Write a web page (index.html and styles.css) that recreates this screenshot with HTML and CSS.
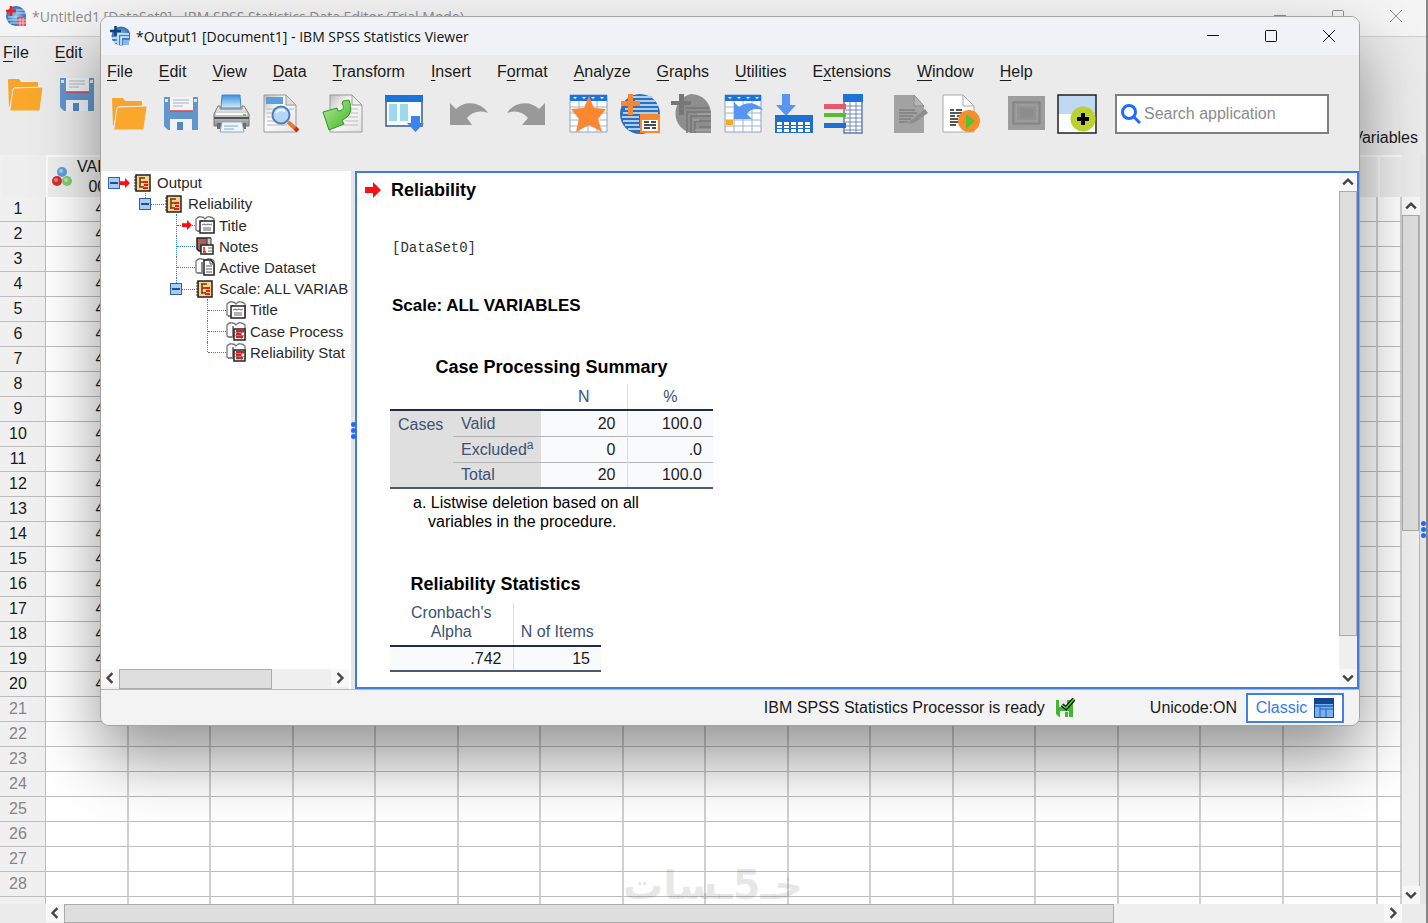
FILE: index.html
```
<!DOCTYPE html>
<html lang="en">
<head>
    <meta charset="UTF-8">
    <meta name="viewport" content="width=device-width, initial-scale=1.0">
    <title>IBM SPSS Statistics Viewer</title>
    <link rel="stylesheet" href="styles.css">
</head>
<body>

    <!-- Shared icons -->
    <svg class="sprite" aria-hidden="true">
        <defs>
            <linearGradient id="steel" x1="0" y1="0" x2="0" y2="1">
                <stop offset="0" stop-color="#f4f4f4"/><stop offset="1" stop-color="#8d8d8d"/>
            </linearGradient>
            <linearGradient id="paper" x1="0" y1="0" x2="1" y2="1">
                <stop offset="0" stop-color="#bdbdbd"/><stop offset="0.4" stop-color="#fdfdfd"/><stop offset="1" stop-color="#e4e4e4"/>
            </linearGradient>
            <linearGradient id="sky" x1="0" y1="0" x2="0" y2="1">
                <stop offset="0" stop-color="#3d8fe0"/><stop offset="1" stop-color="#d5ecfb"/>
            </linearGradient>
            <linearGradient id="leaf" x1="0" y1="0" x2="1" y2="1">
                <stop offset="0" stop-color="#b5eaa0"/><stop offset="1" stop-color="#3fb51f"/>
            </linearGradient>
            <radialGradient id="globe">
                <stop offset="0" stop-color="#9cc8ee"/><stop offset="1" stop-color="#2c6cb4"/>
            </radialGradient>
        </defs>
        <symbol id="folder" viewBox="0 0 40 40">
            <path d="M2 5q0-1 1-1h10l2 3h16q1 0 1 1v4H9L3 33z" fill="#f5a52d"/>
            <path d="M8 13L36 12q1 0 1 1l-3 22q0 1-1 1H5q-2 0-1-2L7 14z" fill="#f9a82c" stroke="#ececec" stroke-width="1"/>
        </symbol>
        <symbol id="floppy" viewBox="0 0 40 40">
            <path d="M3 3h34v33H7l-4-4z" fill="#6196cd"/>
            <path d="M9 3h23v14H9z" fill="#f2f4f6"/>
            <path d="M12 6h16M12 9h16M12 12h10" stroke="#aab4bf"/>
            <path d="M9 17h23" stroke="#d8414d" stroke-width="1.5"/>
            <path d="M9 25h22v11H9z" fill="#eef3f8"/>
            <path d="M16 28h6v8h-6z" fill="#5088c4"/>
            <path d="M4 5h3v3H4zM33 5h3v3h-3z" fill="#dfe9f3"/>
        </symbol>
        <symbol id="book" viewBox="0 0 20 20">
            <path d="M3 2h14v16H3z" fill="#fbd28b" stroke="#222" stroke-width="1.500"/>
            <path d="M1 4h3M1 7h3M1 10h3M1 13h3M1 16h3" stroke="#333"/>
            <path d="M7 5v9M6 5h6M7 9h4M6 14h5" stroke="#6b3a18" stroke-width="1.5" fill="none"/>
            <path d="M10 9h5M11 12h4M10 15h5" stroke="#f01818" stroke-width="2"/>
        </symbol>
        <symbol id="pages" viewBox="0 0 20 20">
            <path d="M1 15V4q3-3 5-2 3 0 4 2 2-3 5-2 2 0 4 2v12H3z" fill="#fff" stroke="#777" stroke-width="1.3"/>
            <path d="M2 16h5V5" fill="none" stroke="#888" stroke-width="2"/>
        </symbol>
        <symbol id="title" viewBox="0 0 20 20">
            <use href="#pages"/>
            <path d="M5 6h14v12H5z" fill="#fff" stroke="#222" stroke-width="1.5"/>
            <path d="M7 10l2-1 2 1 2-1 2 1 2-1M8 13h8M8 15h8" stroke="#666" fill="none"/>
        </symbol>
        <symbol id="notes" viewBox="0 0 20 20">
            <path d="M2 2h13v13H4l-2-2z" fill="#a9625c" stroke="#222" stroke-width="1.5"/>
            <path d="M12 2h4v10h-4z" fill="#ccc" stroke="#333"/>
            <path d="M6 9h12v9H6z" fill="#fff" stroke="#222" stroke-width="1.5"/>
            <path d="M9 11v5M8 16h3" stroke="#f01818" stroke-width="1.5"/>
            <path d="M13 12h4M13 15h4" stroke="#666"/>
        </symbol>
        <symbol id="dataset" viewBox="0 0 20 20">
            <use href="#pages"/>
            <path d="M9 3h7l3 4v11H9z" fill="#fff" stroke="#222" stroke-width="1.5"/>
            <path d="M15 3v4h4M11 9h6M11 12h6M11 15h6" stroke="#555" fill="none"/>
        </symbol>
        <symbol id="pivot" viewBox="0 0 20 20">
            <use href="#pages"/>
            <path d="M8 8h11v11H8z" fill="#fff" stroke="#222" stroke-width="1.5"/>
            <path d="M10 10h8M10 13h5M10 16h7" stroke="#f01818" stroke-width="2"/>
            <path d="M12 8v11M15.500 8v11M8 11.500h11M8 14.500h11" stroke="#555" stroke-width="0.600"/>
        </symbol>
        <symbol id="arrow" viewBox="0 0 16 16">
            <path d="M0 5h8V0l8 8-8 8v-5H0z" fill="#fa0f14"/>
        </symbol>
        <symbol id="chevron" viewBox="0 0 10 10">
            <path d="M1 7l4-4 4 4" fill="none" stroke="#444" stroke-width="2"/>
        </symbol>
    </svg>

    <!-- Data Editor -->
    <div class="editor">
        <header class="titlebar">
            <svg class="app-icon" viewBox="0 0 20 20">
                <circle cx="10" cy="10" r="10" fill="url(#globe)"/>
                <path d="M2 11h10M1 14h10M4 17h8M10 4h8M10 7h9" stroke="#b8d8f4"/>
                <path d="M11 11h9v9h-9z" fill="#d8536a"/>
                <path d="M11 14h9M11 17h9M14 12v8M17 12v8" stroke="#f4c3cc"/>
                <path d="M0 5h10M5 0v10" stroke="#f01e1e" stroke-width="2.500"/>
            </svg>
            <span class="title">*Untitled1 [DataSet0] - IBM SPSS Statistics Data Editor (Trial Mode)</span>
            <div class="controls">
                <button aria-label="Minimize"><svg viewBox="0 0 12 12"><path d="M0 5.500h12"/></svg></button>
                <button aria-label="Maximize"><svg viewBox="0 0 12 12"><rect x="0.500" y="0.500" width="11" height="11" rx="1"/></svg></button>
                <button aria-label="Close"><svg viewBox="0 0 12 12"><path d="M0 0l12 12M12 0L0 12"/></svg></button>
            </div>
        </header>
        <nav class="menu">
            <a href="#"><u>F</u>ile</a>
            <a href="#"><u>E</u>dit</a>
        </nav>
        <div class="toolbar">
            <div class="tools">
                <button aria-label="Open"><svg><use href="#folder"/></svg></button>
                <button aria-label="Save"><svg><use href="#floppy"/></svg></button>
            </div>
        </div>
        <p class="visible-count">Visible: 15 of 15 Variables</p>
        <div class="sheet">
            <div class="grid">
                <table>
                    <colgroup>
                        <col class="col-number">
                        <col span="15">
                        <col class="col-wide">
                        <col class="col-end">
                    </colgroup>
                    <thead>
                        <tr id="sheetHead">
                            <th></th>
                            <th>
                                <div class="variable">
                                    <svg viewBox="0 0 20 20">
                                        <circle cx="10" cy="5" r="5" fill="#5f9ddf"/>
                                        <circle cx="5" cy="14" r="5" fill="#d02f2f"/>
                                        <circle cx="15" cy="14" r="5" fill="#80cc70"/>
                                        <circle cx="9" cy="4" r="2" fill="#a9cef2"/>
                                        <circle cx="4" cy="13" r="2" fill="#ec7d7d"/>
                                        <circle cx="14" cy="13" r="2" fill="#b9eaaa"/>
                                    </svg>
                                    <span>VAR00<br>001</span>
                                </div>
                            </th>
                        </tr>
                    </thead>
                    <tbody id="sheetRows"></tbody>
                </table>
                <div class="watermark" lang="ar" dir="rtl">خـ5ـسات</div>
            </div>
            <div class="vscroll">
                <button aria-label="Scroll up"><svg><use href="#chevron"/></svg></button>
                <div class="thumb"></div>
                <div class="track"></div>
                <button class="down" aria-label="Scroll down"><svg><use href="#chevron"/></svg></button>
            </div>
            <div class="hscroll">
                <button class="left" aria-label="Scroll left"><svg><use href="#chevron"/></svg></button>
                <div class="thumb"></div>
                <div class="track"></div>
                <button class="right" aria-label="Scroll right"><svg><use href="#chevron"/></svg></button>
            </div>
            <div class="edge"><i></i><i></i><i></i></div>
        </div>
    </div>

    <!-- Output Viewer -->
    <main class="viewer">
        <header class="titlebar">
            <svg class="app-icon" viewBox="0 0 20 20">
                <circle cx="11" cy="10" r="9.500" fill="url(#globe)"/>
                <path d="M9 8h10v11H9z" fill="#3f7fc6"/>
                <path d="M8 19V8h11M11 19v-8h8M1 12h6M3 16h4" stroke="#e3f0fb" fill="none" stroke-width="1.500"/>
                <path d="M13 14h6v5h-6z" fill="#8ab5e2"/>
                <path d="M0 5h11M5.500 0v10" stroke="#143f7d" stroke-width="2.500"/>
            </svg>
            <span class="title">*Output1 [Document1] - IBM SPSS Statistics Viewer</span>
            <div class="controls">
                <button aria-label="Minimize"><svg viewBox="0 0 12 12"><path d="M0 5.500h12"/></svg></button>
                <button aria-label="Maximize"><svg viewBox="0 0 12 12"><rect x="0.500" y="0.500" width="11" height="11" rx="1"/></svg></button>
                <button aria-label="Close"><svg viewBox="0 0 12 12"><path d="M0 0l12 12M12 0L0 12"/></svg></button>
            </div>
        </header>

        <nav class="menu">
            <a href="#"><u>F</u>ile</a>
            <a href="#"><u>E</u>dit</a>
            <a href="#"><u>V</u>iew</a>
            <a href="#"><u>D</u>ata</a>
            <a href="#"><u>T</u>ransform</a>
            <a href="#"><u>I</u>nsert</a>
            <a href="#">F<u>o</u>rmat</a>
            <a href="#"><u>A</u>nalyze</a>
            <a href="#"><u>G</u>raphs</a>
            <a href="#"><u>U</u>tilities</a>
            <a href="#">E<u>x</u>tensions</a>
            <a href="#"><u>W</u>indow</a>
            <a href="#"><u>H</u>elp</a>
        </nav>

        <div class="toolbar">
            <div class="tools">
                <button aria-label="Open"><svg><use href="#folder"/></svg></button>
                <button aria-label="Save"><svg><use href="#floppy"/></svg></button>
                <button aria-label="Print">
                    <svg viewBox="0 0 40 40">
                        <path d="M10 1h18l1 13H9z" fill="url(#sky)" stroke="#4b86c4"/>
                        <path d="M8 12H6l-4 8v12h35V20l-5-8h-2v3H8z" fill="url(#steel)" stroke="#777"/>
                        <path d="M4 20h31" stroke="#fafafa" stroke-width="2"/>
                        <path d="M2 24h35" stroke="#555" stroke-width="2"/>
                        <path d="M5 29h29v6H5z" fill="#6d6d6d"/>
                        <path d="M10 28h20l2 10H8z" fill="#eef5fc" stroke="#8fa8c2"/>
                        <path d="M12 32h14M12 35h10" stroke="#7fa9d8"/>
                        <path d="M31 20h3v2h-3z" fill="#58cf3e"/>
                    </svg>
                </button>
                <button aria-label="Print preview">
                    <svg viewBox="0 0 40 40">
                        <path d="M1 1h22l10 10v27H1z" fill="url(#paper)" stroke="#999"/>
                        <path d="M23 1v10h10z" fill="#ddd" stroke="#999"/>
                        <path d="M3 3h17v7H3z" fill="#5d9fdd"/>
                        <path d="M4 15h8M4 19h6M4 23h6M4 27h8M26 15h5M4 31h20" stroke="#b5b5b5"/>
                        <path d="M25 28l9 8" stroke="#de7a35" stroke-width="4"/>
                        <path d="M32 34l3 3" stroke="#c92f1c" stroke-width="4"/>
                        <circle cx="18" cy="21" r="8.500" fill="#b4d6f5" stroke="#4f7fba" stroke-width="2"/>
                        <path d="M13 19q3-5 9-2" stroke="#eef8ff" stroke-width="2" fill="none"/>
                    </svg>
                </button>
            </div>
            <div class="tools wide">
                <button aria-label="Export">
                    <svg viewBox="0 0 40 40">
                        <path d="M3 1h22l10 10v27H3z" fill="url(#paper)" stroke="#999"/>
                        <path d="M25 1v10h10z" fill="#eee" stroke="#999"/>
                        <path d="M21 15h10M22 19h9M21 23h10M18 27h13M15 31h16" stroke="#bbb"/>
                        <path d="M-4 18L10 14l1 3c5 0 7-4 4-7l1-3 6-1c4 10 1 17-7 20l2 4L2 36z" fill="url(#leaf)" stroke="#2e9a1b"/>
                    </svg>
                </button>
                <button aria-label="Designate window">
                    <svg viewBox="0 0 40 40">
                        <path d="M2 2h36v30H2z" fill="#f5fafd" stroke="#3c5a80" stroke-width="1.500"/>
                        <path d="M1 1h38v7H1z" fill="#1e73d8"/>
                        <path d="M5 10h8v17H5zM16 10h8v17h-8z" fill="#9fd8ec"/>
                        <path d="M27 22h9v7h4l-8.500 9L23 29h4z" fill="#3a83ea"/>
                    </svg>
                </button>
            </div>
            <div class="tools medium">
                <button aria-label="Undo">
                    <svg viewBox="0 0 40 40"><path d="M2 9l6 6c9-9 25-7 32 4-9-3-16-1-21 5l5 7H2z" fill="#999"/></svg>
                </button>
                <button aria-label="Redo">
                    <svg viewBox="0 0 40 40"><path d="M40 9l-6 6C25 6 9 8 2 19c9-3 16-1 21 5l-6 7h23z" fill="#999"/></svg>
                </button>
            </div>
            <div class="tools">
                <button aria-label="Go to case">
                    <svg viewBox="0 0 40 40">
                        <path d="M1 1h37v37H1z" fill="#fff" stroke="#8ba3c4"/>
                        <path d="M1 13h37M1 19h37M1 26h37M1 32h37M10 7v31M19 7v31M28 7v31" stroke="#9fb2cd"/>
                        <path d="M1 1h37v6H1z" fill="#1e73d8"/>
                        <path d="M4 3h4l-2 2zM13 3h4l-2 2zM22 3h4l-2 2zM31 3h4l-2 2z" fill="#fff"/>
                        <path d="M20 2l5 12 12 1-8 10 4 13-13-7-13 7 3-13-8-10 13-1z" fill="#fb8830"/>
                    </svg>
                </button>
                <button aria-label="Statistics report">
                    <svg viewBox="0 0 40 40">
                        <circle cx="20" cy="20" r="20" fill="#2f6fba"/>
                        <path d="M12 3h20M15 7h20M14 11h24M5 15h33M3 19h35M2 23h17M3 27h16M5 31h14M8 35h12" stroke="#a9d0f2" stroke-width="2"/>
                        <path d="M8 0h5v7h7v5h-7v9H8v-9H1V7h7z" fill="#fb8830"/>
                        <path d="M20 20h20v19H20z" fill="#fb8830"/>
                        <path d="M22 26h16v11H22z" fill="#fff"/>
                        <path d="M24 28h5M31 28h5M24 31h12M24 34h6M32 34h4" stroke="#111" stroke-width="1.500"/>
                    </svg>
                </button>
                <button aria-label="Data editor">
                    <svg viewBox="0 0 40 40">
                        <path d="M20 0a20 20 0 0 1 20 20v19H20A20 20 0 0 1 20 0z" fill="#8e8e8e"/>
                        <path d="M8 0h5v7h7v4h-7v10H8V11H0V7h8z" fill="#777"/>
                        <path d="M14 14h24M16 18h24M16 39V17M20 39V22h20M24 39V27h16M28 33h12" stroke="#767676" stroke-width="1.500" fill="none"/>
                        <path d="M26 20h14M22 26h6M24 36h16" stroke="#a4a4a4" stroke-width="1.500"/>
                    </svg>
                </button>
                <button aria-label="Go to variable">
                    <svg viewBox="0 0 40 40">
                        <path d="M3 1h36v37H3z" fill="#fff" stroke="#8ba3c4"/>
                        <path d="M3 13h36M3 19h36M3 26h36M3 32h36M12 7v31M21 7v31M30 7v31" stroke="#9fb2cd"/>
                        <path d="M3 1h36v6H3z" fill="#1e73d8"/>
                        <path d="M6 3h4l-2 2zM15 3h4l-2 2zM24 3h4l-2 2zM33 3h4l-2 2z" fill="#fff"/>
                        <path d="M4 26h7v5H4z" fill="#f2ac1f"/>
                        <path d="M12 8l5 5c7-6 18-5 24 3-7-2-13-1-16 4l5 5H12z" fill="#5795f2"/>
                    </svg>
                </button>
                <button aria-label="Insert cases">
                    <svg viewBox="0 0 40 40">
                        <path d="M9 0h8v11h6L13 22 3 11h6z" fill="#5795f2"/>
                        <path d="M2 21h38v18H2z" fill="#1e6fd0"/>
                        <path d="M4 28h5v3H4zM11 28h5v3h-5zM18 28h5v3h-5zM25 28h5v3h-5zM32 28h5v3h-5zM4 32h5v2H4zM11 32h5v2h-5zM18 32h5v2h-5zM25 32h5v2h-5zM32 32h5v2h-5zM4 35h5v3H4zM11 35h5v3h-5zM18 35h5v3h-5zM25 35h5v3h-5zM32 35h5v3h-5z" fill="#fff"/>
                    </svg>
                </button>
                <button aria-label="Insert variable">
                    <svg viewBox="0 0 40 40">
                        <path d="M20 1h18v38H20z" fill="#fff" stroke="#5f7bab" stroke-width="1.500"/>
                        <path d="M20 12h18M20 16h18M20 20h18M20 24h18M20 28h18M20 32h18M20 36h18M26 8v31M32 8v31" stroke="#6f88b3"/>
                        <path d="M19 0h20v8H19z" fill="#1e73d8"/>
                        <path d="M0 10h22v5H0z" fill="#e8586b"/>
                        <path d="M0 19h22v4H0z" fill="#55bf2d"/>
                        <path d="M0 29h22v5H0z" fill="#1e6fd0"/>
                    </svg>
                </button>
            </div>
            <div class="tools scripts">
                <button aria-label="Edit script">
                    <svg viewBox="0 0 40 40">
                        <path d="M3 1h20l10 11v27H3z" fill="#a3a3a3"/>
                        <path d="M23 1v11h10z" fill="#b5b5b5" stroke="#8b8b8b"/>
                        <path d="M8 16h16M8 19h18M8 22h14M8 25h12M8 28h9" stroke="#808080" stroke-width="1.500"/>
                        <path d="M19 27l15-12 3 4-14 10-6 1z" fill="#8d8d8d"/>
                    </svg>
                </button>
                <button aria-label="Run script">
                    <svg viewBox="0 0 40 40">
                        <path d="M1 1h20l11 11v26H1z" fill="#fff" stroke="#aaa"/>
                        <path d="M21 1v11h11z" fill="#fff" stroke="#aaa"/>
                        <path d="M8 16h4M14 16h6M8 19h12M8 22h5M15 22h5M8 25h8M8 28h10M8 31h6" stroke="#222" stroke-width="1.500"/>
                        <circle cx="27" cy="27" r="11" fill="#f98d2b"/>
                        <path d="M24 20l9 7-9 8z" fill="#55c132"/>
                    </svg>
                </button>
            </div>
            <div class="tools">
                <button aria-label="Presentation">
                    <svg viewBox="0 0 40 40">
                        <path d="M2 2h37v34H2z" fill="#9d9d9d"/>
                        <path d="M7 8h27v22H7z" fill="#929292" stroke="#7a7a7a"/>
                        <path d="M10 11h21v16H10z" fill="none" stroke="#a5a5a5"/>
                        <path d="M14 14h13v10H14z" fill="#8c8c8c"/>
                    </svg>
                </button>
                <button aria-label="Add">
                    <svg viewBox="0 0 40 40">
                        <path d="M1 1h38v38H1z" fill="#fbfcfd"/>
                        <path d="M1 1h38v19H1z" fill="#c0d8f1"/>
                        <path d="M1 1h38v38H1z" fill="none" stroke="#222" stroke-width="1.500"/>
                        <circle cx="26" cy="25" r="12.500" fill="#bbd12c"/>
                        <path d="M20 25h12M26 19v12" stroke="#000" stroke-width="4"/>
                    </svg>
                </button>
                <label class="search">
                    <svg viewBox="0 0 20 20"><circle cx="8" cy="8" r="6.500"/><path d="M13 13l6 6"/></svg>
                    <input type="text" placeholder="Search application" aria-label="Search application">
                </label>
            </div>
        </div>

        <div class="panes">
            <aside class="outline">
                <ul class="tree">
                    <li class="level0">
                        <span class="branch"><i class="box"></i><svg class="mark"><use href="#arrow"/></svg></span>
                        <svg><use href="#book"/></svg>Output
                    </li>
                    <li class="level1">
                        <span class="branch stem line"><i class="box"></i></span>
                        <svg><use href="#book"/></svg>Reliability
                    </li>
                    <li class="level2">
                        <span class="branch stem line"><svg class="mark"><use href="#arrow"/></svg></span>
                        <svg><use href="#title"/></svg>Title
                    </li>
                    <li class="level2"><span class="branch stem line"></span><svg><use href="#notes"/></svg>Notes</li>
                    <li class="level2"><span class="branch stem line"></span><svg><use href="#dataset"/></svg>Active Dataset</li>
                    <li class="level2">
                        <span class="branch stem line last"><i class="box"></i></span>
                        <svg><use href="#book"/></svg>Scale: ALL VARIAB
                    </li>
                    <li class="level3"><span class="branch stem line"></span><svg><use href="#title"/></svg>Title</li>
                    <li class="level3"><span class="branch stem line"></span><svg><use href="#pivot"/></svg>Case Process</li>
                    <li class="level3"><span class="branch stem line last"></span><svg><use href="#pivot"/></svg>Reliability Stat</li>
                </ul>
                <div class="hscroll">
                    <button class="left" aria-label="Scroll left"><svg><use href="#chevron"/></svg></button>
                    <div class="thumb"></div>
                    <div class="track"></div>
                    <button class="right" aria-label="Scroll right"><svg><use href="#chevron"/></svg></button>
                </div>
            </aside>
            <div class="splitter"><i></i><i></i><i></i></div>
            <section class="output">
                <div class="document">
                    <h1><svg><use href="#arrow"/></svg>Reliability</h1>
                    <pre>[DataSet0]</pre>
                    <h2>Scale: ALL VARIABLES</h2>

                    <table class="pivot summary">
                        <caption>Case Processing Summary</caption>
                        <colgroup>
                            <col class="col-group">
                            <col class="col-label">
                            <col>
                            <col>
                        </colgroup>
                        <thead>
                            <tr>
                                <td colspan="2"></td>
                                <th>N</th>
                                <th>%</th>
                            </tr>
                        </thead>
                        <tbody>
                            <tr>
                                <th rowspan="3">Cases</th>
                                <th>Valid</th>
                                <td>20</td>
                                <td>100.0</td>
                            </tr>
                            <tr>
                                <th>Excluded<sup>a</sup></th>
                                <td>0</td>
                                <td>.0</td>
                            </tr>
                            <tr>
                                <th>Total</th>
                                <td>20</td>
                                <td>100.0</td>
                            </tr>
                        </tbody>
                    </table>
                    <p class="footnote">a. Listwise deletion based on all<br>variables in the procedure.</p>

                    <table class="pivot reliability">
                        <caption>Reliability Statistics</caption>
                        <thead>
                            <tr>
                                <th>Cronbach's<br>Alpha</th>
                                <th>N of Items</th>
                            </tr>
                        </thead>
                        <tbody>
                            <tr>
                                <td>.742</td>
                                <td>15</td>
                            </tr>
                        </tbody>
                    </table>
                </div>
                <div class="vscroll">
                    <button aria-label="Scroll up"><svg><use href="#chevron"/></svg></button>
                    <div class="thumb"></div>
                    <div class="track"></div>
                    <button class="down" aria-label="Scroll down"><svg><use href="#chevron"/></svg></button>
                </div>
            </section>
        </div>

        <footer class="status">
            <span>IBM SPSS Statistics Processor is ready</span>
            <svg class="ready" viewBox="0 0 20 20">
                <path d="M1 2h17v17H4l-3-3z" fill="#43b433"/>
                <path d="M4 2h8v7H4z" fill="#e5e5e5"/>
                <path d="M5 13h9v6H5z" fill="#f2f2f2"/>
                <path d="M10 14h3v5h-3z" fill="#43b433"/>
                <path d="M7 7l4 3 8-9" fill="none" stroke="#111" stroke-width="4"/>
                <path d="M7 7l4 3 8-9" fill="none" stroke="#5fd23f" stroke-width="1.500"/>
            </svg>
            <span class="unicode">Unicode:ON</span>
            <button class="classic">
                Classic
                <svg viewBox="0 0 20 20">
                    <path d="M0 0h20v20H0z" fill="#16458f"/>
                    <path d="M1 6h18v13H1z" fill="#7cb0f0"/>
                    <path d="M1 7h18v2H1z" fill="#2f74d0"/>
                    <path d="M6 9v10M6 11h13M12 11v8" stroke="#2461b8" fill="none"/>
                </svg>
            </button>
        </footer>
    </main>

    <script>
        const columnCount = 17;
        const lastCase = 20;
        const lastNumber = 28;
        const rowCount = 29;

        let head = document.getElementById("sheetHead");
        for (let i = 1; i < columnCount; i++) {
            head.innerHTML += "<th></th>";
        }

        let rows = "";
        for (let r = 1; r <= rowCount; r++) {
            let hasData = r <= lastCase;
            rows += `<tr class="${hasData ? "filled" : ""}">
                        <th>${r <= lastNumber ? r : ""}</th>
                        <td>${hasData ? "4.00" : ""}</td>`;
            rows += "<td></td>".repeat(columnCount - 1) + "</tr>";
        }
        document.getElementById("sheetRows").innerHTML = rows;
    </script>

</body>
</html>
```
FILE: styles.css
```
* {
    box-sizing: border-box;
}

body {
    margin: 0;
    height: 100vh;
    overflow: hidden;
    position: relative;
    font-family: "Liberation Sans", Arial, sans-serif;
    font-size: 16px;
    color: #1a1a1a;
    background-color: #ebebeb;
}

.sprite {
    position: absolute;
    width: 0;
    height: 0;
}

button {
    display: flex;
    align-items: center;
    justify-content: center;
    padding: 0;
    border: none;
    background: transparent;
    color: inherit;
    font: inherit;
}

svg {
    display: block;
    flex: none;
}

/* Window title bars */
.titlebar {
    display: flex;
    align-items: center;
    flex: none;
    font-family: "Open Sans", "Noto Sans", sans-serif;
    font-size: 14px;
}

.app-icon {
    width: 20px;
    height: 20px;
}

.title {
    flex: 1;
    padding-left: 6px;
    white-space: nowrap;
}

.controls {
    display: flex;
    padding-right: 1px;
}

.controls button {
    width: 58px;
    height: 32px;
}

.controls svg {
    width: 12px;
    height: 12px;
    overflow: visible;
    fill: none;
    stroke: currentColor;
}

/* Menus and toolbars */
.menu {
    display: flex;
    align-items: center;
    flex: none;
    gap: 26px;
    height: 34px;
    padding-left: 6px;
}

.menu a {
    color: #1a1a1a;
    text-decoration: none;
}

.menu u {
    text-underline-offset: 3px;
}

.toolbar {
    display: flex;
    align-items: flex-start;
    flex: none;
    gap: 24px;
}

.tools {
    display: flex;
    gap: 11px;
}

.tools.wide,
.tools.medium {
    gap: 17px;
}

.tools.scripts {
    margin-left: 3px;
}

.tools button,
.tools button svg {
    width: 40px;
    height: 40px;
    overflow: visible;
}

/* Scroll bars */
.vscroll,
.hscroll {
    display: flex;
    background-color: #efefef;
}

.vscroll {
    flex-direction: column;
    width: 18px;
}

.hscroll {
    height: 20px;
}

.vscroll button,
.hscroll button {
    flex: none;
    width: 18px;
    height: 18px;
    background-color: #f7f7f7;
}

.vscroll svg,
.hscroll svg {
    width: 12px;
    height: 12px;
}

.thumb {
    background-color: #dedede;
    border: 1px solid #ababab;
}

.down svg {
    transform: rotate(180deg);
}

.left svg {
    transform: rotate(-90deg);
}

.right svg {
    transform: rotate(90deg);
}

/* Data editor */
.editor {
    display: flex;
    flex-direction: column;
    height: 100%;
    border-right: 2px solid #858585;
}

.editor .titlebar {
    height: 37px;
    padding: 0 0 4px 6px;
    color: #8c8c8c;
    background-color: #f4f4f4;
    border-bottom: 1px solid #cfcfcf;
}

.editor .menu {
    height: 32px;
    padding-left: 3px;
}

.editor .toolbar {
    height: 56px;
    padding: 6px 0 0 6px;
}

.visible-count {
    flex: none;
    height: 30px;
    margin: 0;
    padding-right: 8px;
    line-height: 26px;
    text-align: right;
}

.sheet {
    flex: 1;
    min-height: 0;
    display: grid;
    grid-template-columns: 1fr 18px 6px;
    grid-template-rows: 1fr 19px;
}

.grid {
    position: relative;
    overflow: hidden;
    background-color: #ffffff;
}

.grid table {
    width: 100%;
    table-layout: fixed;
    border-collapse: separate;
    border-spacing: 0;
}

.col-number {
    width: 46px;
}

.col-wide {
    width: 94px;
}

.col-end {
    width: 24px;
}

.grid th,
.grid td {
    height: 25px;
    padding: 0;
    border-right: 2px solid #d0d0d0;
    border-bottom: 1px solid #bdbdbd;
    font-weight: normal;
    text-align: right;
    line-height: 20px;
}

.grid thead th {
    height: 42px;
    background-color: #eeeeee;
    border: none;
    border-left: 2px solid #fafafa;
    border-top: 2px solid #fafafa;
}

.grid thead th:first-child {
    border-color: #f0f0f0;
}

.grid tbody th {
    padding-right: 9px;
    text-align: center;
    color: #858585;
    background-color: #f0f0f0;
    border-right: 1px solid #bdbdbd;
}

.grid .filled th {
    color: #1a1a1a;
}

.variable {
    display: flex;
    align-items: center;
    gap: 5px;
    padding-left: 4px;
    text-align: center;
}

.variable svg {
    width: 20px;
    height: 20px;
}

.watermark {
    position: absolute;
    left: 0;
    right: 0;
    bottom: 0;
    padding-left: 24px;
    font-family: "DejaVu Sans", sans-serif;
    font-weight: bold;
    font-size: 40px;
    line-height: 38px;
    text-align: center;
    color: rgba(0, 0, 0, 0.1);
}

.sheet .vscroll {
    margin-top: 42px;
    border-right: 1px solid #b5b5b5;
}

.sheet .vscroll .thumb {
    flex: 315;
}

.sheet .vscroll .track {
    flex: 356;
}

.sheet .hscroll {
    grid-row: 2;
    height: 19px;
    margin-left: 46px;
}

.sheet .hscroll .thumb {
    flex: 1050;
}

.sheet .hscroll .track {
    flex: 270;
}

.edge,
.splitter {
    display: flex;
    flex-direction: column;
    align-items: center;
    justify-content: center;
    gap: 1px;
    background-color: #e6e6e6;
}

.edge i,
.splitter i {
    flex: none;
    width: 5px;
    height: 5px;
    border-radius: 50%;
    background-color: #1f6bff;
}

/* Output viewer window */
.viewer {
    position: absolute;
    top: 16px;
    right: 68px;
    bottom: 197px;
    left: 100px;
    display: flex;
    flex-direction: column;
    overflow: hidden;
    border: 1px solid #a3a3a3;
    border-radius: 9px;
    background-color: #ebebeb;
    box-shadow: 0 32px 64px rgba(0, 0, 0, 0.42);
}

.viewer .titlebar {
    height: 38px;
    padding-left: 9px;
    color: #111111;
    background-color: #eff3f7;
}

.viewer .toolbar {
    height: 82px;
    padding: 5px 0 0 9px;
}

.search {
    display: flex;
    align-items: center;
    gap: 3px;
    width: 214px;
    height: 40px;
    margin-left: 7px;
    padding-left: 4px;
    border: 2px solid #808080;
    background-color: #ffffff;
}

.search svg {
    width: 20px;
    height: 20px;
    fill: none;
    stroke: #1f6bff;
    stroke-width: 3;
}

.search input {
    flex: 1;
    min-width: 0;
    padding: 0;
    border: none;
    outline: none;
    background: transparent;
    font: inherit;
}

.search input::placeholder {
    color: #8c8c8c;
    opacity: 1;
}

.panes {
    flex: 1;
    min-height: 0;
    display: flex;
}

/* Outline tree */
.outline {
    display: flex;
    flex-direction: column;
    justify-content: space-between;
    width: 250px;
    padding-right: 2px;
    background-color: #ffffff;
}

.tree {
    display: grid;
    grid-auto-rows: 1fr;
    height: 191px;
    margin: 1px 0 0;
    padding: 0 0 0 6px;
    overflow: hidden;
    list-style: none;
    font-size: 15px;
    color: #2b2b2b;
}

.tree li {
    display: flex;
    align-items: center;
    white-space: nowrap;
}

.tree svg {
    width: 20px;
    height: 20px;
    margin-right: 4px;
}

.level1 {
    padding-left: 31px;
}

.level2 {
    padding-left: 62px;
}

.level3 {
    padding-left: 93px;
}

.branch {
    position: relative;
    flex: none;
    display: flex;
    align-items: center;
    align-self: stretch;
    width: 26px;
}

.stem::before {
    content: '';
    position: absolute;
    top: 0;
    left: 7px;
    height: 100%;
    border-left: 1px dotted #2f7be8;
}

.last::before,
.level1 .stem::before {
    height: 50%;
}

.line::after {
    content: '';
    position: absolute;
    top: 50%;
    left: 8px;
    right: 0;
    border-top: 1px dotted #2f7be8;
}

.box {
    position: relative;
    z-index: 1;
    width: 12px;
    height: 12px;
    margin-left: 1px;
    border: 1px solid #2d62ad;
    background: linear-gradient(#1d4f9c, #1d4f9c) center / 8px 2px no-repeat, #a9cbf4;
}

.tree .mark {
    position: relative;
    z-index: 1;
    width: 10px;
    height: 10px;
    margin: 0 3px 0 auto;
}

.outline .thumb {
    flex: 152;
}

.outline .track {
    flex: 60;
}

.splitter {
    width: 4px;
}

.splitter i {
    z-index: 1;
}

/* Output document */
.output {
    flex: 1;
    min-width: 0;
    display: flex;
    border: 2px solid #3f7be0;
    background-color: #ffffff;
}

.document {
    flex: 1;
    min-width: 0;
    padding-left: 33px;
    overflow: hidden;
    color: #000000;
}

.document h1 {
    display: flex;
    align-items: center;
    gap: 10px;
    height: 22px;
    margin: 6px 0 0 -25px;
    font-size: 18px;
}

.document h1 svg {
    width: 16px;
    height: 16px;
}

.document pre {
    margin: 37px 0 0 2px;
    font-family: "Liberation Mono", monospace;
    font-size: 14px;
    line-height: 20px;
    color: #333333;
}

.document h2 {
    margin: 38px 0 0 2px;
    font-size: 17px;
    line-height: 20px;
}

.pivot {
    table-layout: fixed;
    border-collapse: collapse;
    line-height: 19px;
}

.pivot caption {
    font-size: 18px;
    font-weight: bold;
    color: #000000;
}

.pivot th {
    padding: 0;
    font-weight: normal;
    color: #3c5173;
}

.pivot td {
    padding: 0 11px;
    text-align: right;
    color: #1c1c1c;
}

.pivot th + th,
.pivot td + td {
    border-left: 1px solid #dcdcdc;
}

.pivot tbody {
    border-top: 2px solid #1f2c4a;
    border-bottom: 2px solid #4a5a70;
}

.pivot tbody td {
    background-color: #f9fafb;
}

.summary {
    width: 323px;
    margin-top: 42px;
}

.summary caption {
    height: 26px;
}

.col-group {
    width: 63px;
}

.col-label {
    width: 88px;
}

.summary thead tr {
    height: 26px;
}

.summary tbody tr {
    height: 26px;
}

.summary tbody tr + tr th,
.summary tbody tr + tr td {
    border-top: 1px solid #b5b5b5;
}

.summary tbody th {
    padding-left: 8px;
    text-align: left;
    background-color: #dfdfdf;
    border-left: none;
}

.summary tbody th[rowspan] {
    padding-top: 4px;
    vertical-align: top;
}

.pivot sup {
    font-size: 12px;
    line-height: 0;
}

.footnote {
    margin: 4px 0 0 38px;
    line-height: 19px;
    text-indent: -15px;
}

.reliability {
    width: 211px;
    margin-top: 44px;
}

.reliability caption {
    height: 28px;
}

.reliability thead th {
    height: 43px;
    vertical-align: bottom;
    padding: 0 6px 4px;
}

.reliability thead th:first-child {
    width: 123px;
}

.reliability tbody td {
    height: 25px;
}

.output .thumb {
    flex: 445;
}

.output .track {
    flex: 33;
}

/* Status bar */
.status {
    display: flex;
    align-items: center;
    justify-content: flex-end;
    flex: none;
    height: 36px;
    padding-right: 15px;
    border-top: 1px solid #b9b9b9;
    background-color: #f3f3f3;
}

.ready {
    width: 20px;
    height: 20px;
    margin: 0 75px 0 10px;
}

.classic {
    gap: 7px;
    width: 98px;
    height: 30px;
    margin-left: 9px;
    border: 2px solid #3f7fee;
    background-color: #ffffff;
    color: #3478f0;
}

.classic svg {
    width: 20px;
    height: 20px;
}
```
